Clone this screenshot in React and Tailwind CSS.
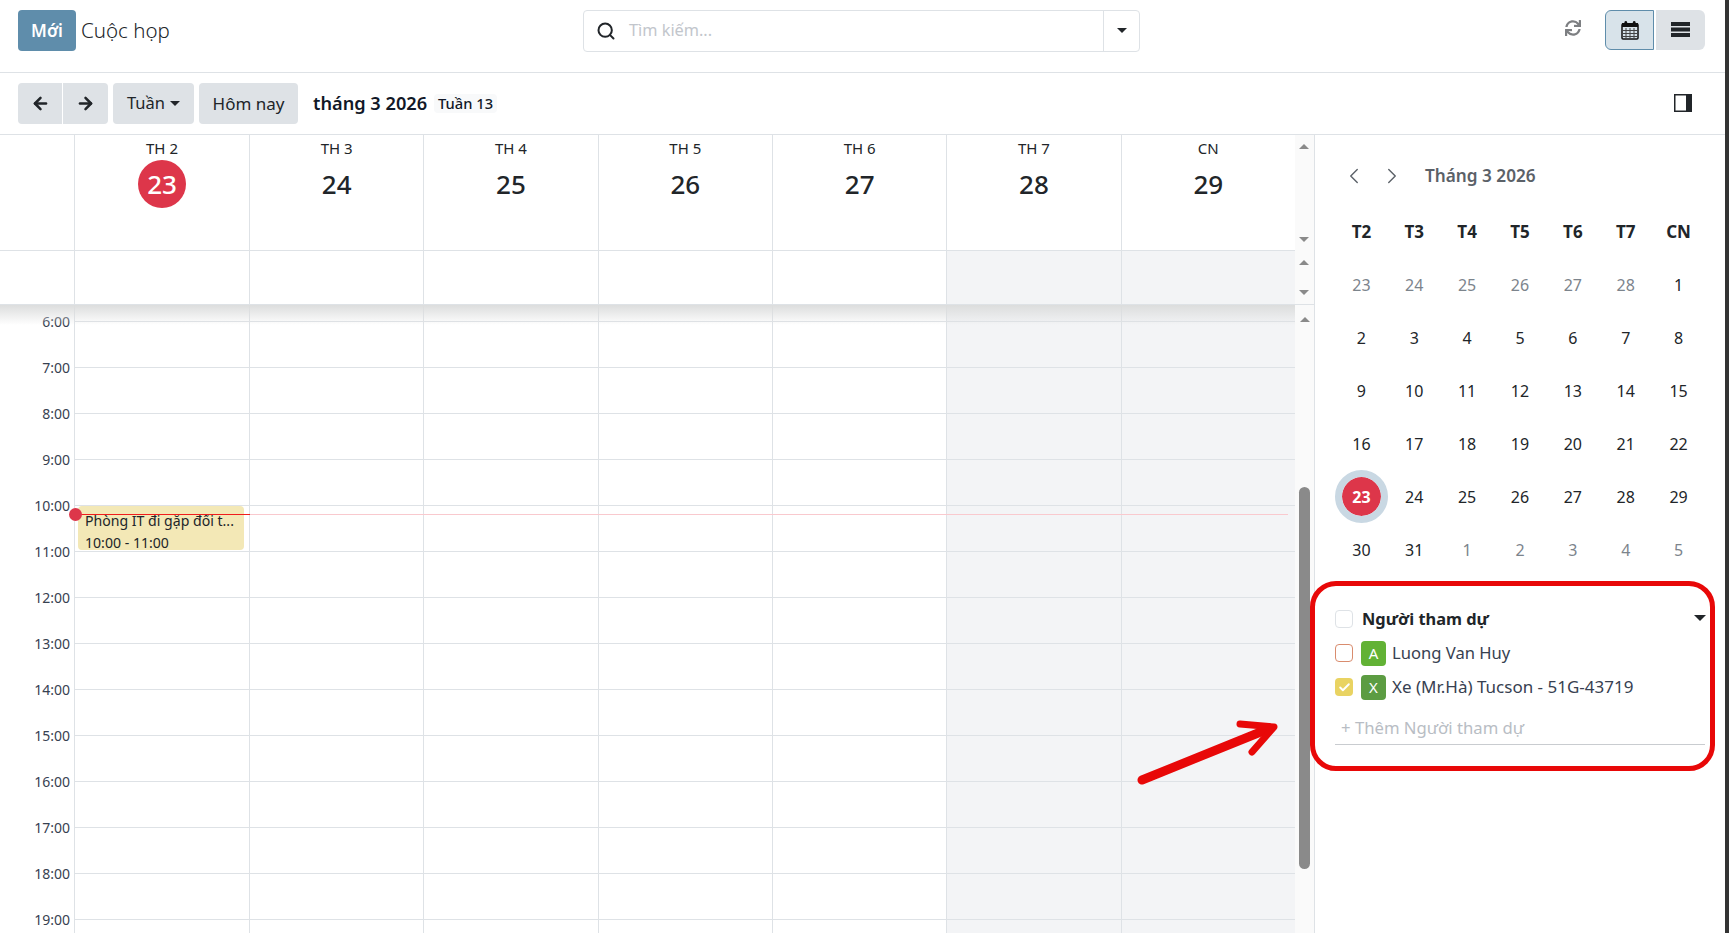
import { ArrowLeft, ArrowRight, Check, ChevronLeft, ChevronRight, Search } from "lucide-react";
import { FaSync } from "react-icons/fa";

const days = [
  { label: "TH 2", num: 23, today: true },
  { label: "TH 3", num: 24 },
  { label: "TH 4", num: 25 },
  { label: "TH 5", num: 26 },
  { label: "TH 6", num: 27 },
  { label: "TH 7", num: 28, weekend: true },
  { label: "CN", num: 29, weekend: true },
];

const hours = [6, 7, 8, 9, 10, 11, 12, 13, 14, 15, 16, 17, 18, 19];

const miniHead = ["T2", "T3", "T4", "T5", "T6", "T7", "CN"];
const miniDays = [
  [23, 24, 25, 26, 27, 28].map((d) => ({ d, muted: true })).concat([{ d: 1 }]),
  [2, 3, 4, 5, 6, 7, 8].map((d) => ({ d })),
  [9, 10, 11, 12, 13, 14, 15].map((d) => ({ d })),
  [16, 17, 18, 19, 20, 21, 22].map((d) => ({ d })),
  [23, 24, 25, 26, 27, 28, 29].map((d) => ({ d, today: d === 23 })),
  [{ d: 30 }, { d: 31 }].concat([1, 2, 3, 4, 5].map((d) => ({ d, muted: true }))),
];

const Caret = ({ className = "" }) => (
  <span className={`inline-block w-0 h-0 border-x-[5px] border-x-transparent border-t-[5px] border-t-[#212529] ${className}`} />
);

const TriUp = () => <span className="block w-0 h-0 border-x-[5px] border-x-transparent border-b-[5px] border-b-[#8a8a8a]" />;
const TriDown = () => <span className="block w-0 h-0 border-x-[5px] border-x-transparent border-t-[5px] border-t-[#8a8a8a]" />;

const CalendarIcon = () => (
  <svg width="18" height="20" viewBox="0 0 18 20">
    <rect x="1" y="4" width="16" height="15" rx="1" fill="#d8e3ea" stroke="#111" strokeWidth="1.5" />
    <rect x="1" y="3" width="16" height="4" fill="#111" />
    <path d="M5 8v10M9 8v10M13 8v10M2 10.5h14M2 13.5h14M2 16.5h14" stroke="#444" strokeWidth="1" />
    <rect x="3.5" y="1" width="2.6" height="5" rx="1.3" fill="#111" />
    <rect x="11.9" y="1" width="2.6" height="5" rx="1.3" fill="#111" />
  </svg>
);

const ListIcon = () => (
  <svg width="19" height="15" viewBox="0 0 19 15">
    <rect width="19" height="4" fill="#212529" />
    <rect y="5.5" width="19" height="4" fill="#212529" />
    <rect y="11" width="19" height="4" fill="#212529" />
  </svg>
);

const PanelIcon = () => (
  <svg width="18" height="18" viewBox="0 0 18 18">
    <rect x="0.75" y="0.75" width="16.5" height="16.5" fill="#fff" stroke="#212529" strokeWidth="1.5" />
    <rect x="12" y="0" width="6" height="18" fill="#212529" />
  </svg>
);

const TopBar = () => (
  <div className="flex items-center h-[73px] shrink-0 border-b border-[#dee2e6] pl-[18px] pr-[20px]">
    <div className="w-[565px] flex items-center gap-[5px] shrink-0 -mt-[11px]">
      <button className="w-[58px] h-[41px] rounded bg-[#5f8dab] text-white text-[17px] font-semibold">Mới</button>
      <span className="text-[20.5px] font-light text-[#212529]">Cuộc họp</span>
    </div>
    <div className="w-[557px] h-[42px] flex items-center rounded border border-[#dee2e6] -mt-[11px]">
      <div className="flex-1 flex items-center pl-[12px] gap-[13px]">
        <Search size={20} strokeWidth={2.4} className="text-[#212529]" />
        <span className="text-[16.3px] text-[#c2c6cc]">Tìm kiếm...</span>
      </div>
      <div className="w-[36px] h-full border-l border-[#dee2e6] flex items-center justify-center">
        <Caret />
      </div>
    </div>
    <div className="flex-1 flex items-center justify-end -mt-[13px]">
      <FaSync size={16} className="text-[#7d7f82] mr-[24px] -mt-[4px]" />
      <button className="w-[49px] h-[40px] rounded-l-md border border-[#5f8dab] bg-[#d8e3ea] flex items-center justify-center">
        <CalendarIcon />
      </button>
      <button className="ml-[2px] w-[49px] h-[40px] rounded-r-md bg-[#dee2e6] flex items-center justify-center">
        <ListIcon />
      </button>
    </div>
  </div>
);

const Toolbar = () => (
  <div className="flex items-center h-[62px] shrink-0 border-b border-[#dee2e6] pl-[18px] pr-[33px]">
    <button className="w-[44px] h-[41px] rounded-l bg-[#dee2e6] flex items-center justify-center text-[#212529]">
      <ArrowLeft size={19} strokeWidth={3.2} />
    </button>
    <button className="ml-px w-[45px] h-[41px] rounded-r bg-[#dee2e6] flex items-center justify-center text-[#212529]">
      <ArrowRight size={19} strokeWidth={3.2} />
    </button>
    <button className="ml-[5px] w-[81px] h-[41px] rounded bg-[#dee2e6] text-[16.5px] text-[#212529] flex items-center justify-center gap-[5px]">
      Tuần <Caret />
    </button>
    <button className="ml-[5px] w-[99px] h-[41px] rounded bg-[#dee2e6] text-[17px] text-[#212529]">Hôm nay</button>
    <span className="ml-[15px] text-[18.2px] font-semibold text-[#111827]">tháng 3 2026</span>
    <span className="ml-[7px] px-[4px] h-[19px] leading-[19px] rounded bg-[#f8f9fa] text-[14.7px] font-medium text-[#111827]">Tuần 13</span>
    <div className="ml-auto -mt-[2px]"><PanelIcon /></div>
  </div>
);

const Scroller = ({ className = "", children }) => (
  <div className={`w-[20px] shrink-0 bg-[#fafafa] border-r border-[#dee2e6] flex flex-col items-center ${className}`}>{children}</div>
);

const WeekHeader = () => (
  <div className="flex h-[116px] shrink-0">
    <div className="w-[74px] shrink-0 border-b border-[#dee2e6]" />
    {days.map((day, i) => (
      <div
        key={day.label}
        className={`border-l border-b border-[#dee2e6] flex flex-col items-center pt-[3px] ${i === 0 ? "w-[175px] shrink-0" : "flex-1"}`}
      >
        <span className="text-[15px] leading-[20px] text-[#212529]">{day.label}</span>
        {day.today ? (
          <span className="mt-[2px] w-[48px] h-[48px] rounded-full bg-[#dd364a] text-white text-[26px] font-medium flex items-center justify-center">
            {day.num}
          </span>
        ) : (
          <span className="mt-[2px] h-[48px] text-[26px] font-medium text-[#212529] flex items-center">{day.num}</span>
        )}
      </div>
    ))}
    <Scroller className="justify-between py-[9px]">
      <TriUp />
      <TriDown />
    </Scroller>
  </div>
);

const AllDay = () => (
  <div className="flex h-[54px] shrink-0 border-b border-[#dee2e6]">
    <div className="w-[74px] shrink-0" />
    {days.map((day, i) => (
      <div
        key={day.label}
        className={`border-l border-[#dee2e6] ${i === 0 ? "w-[175px] shrink-0" : "flex-1"} ${day.weekend ? "bg-[#f3f4f6]" : ""}`}
      />
    ))}
    <Scroller className="justify-between py-[9px]">
      <TriUp />
      <TriDown />
    </Scroller>
  </div>
);

const TimeGrid = () => (
  <div className="flex flex-1 min-h-0 overflow-hidden">
    <div className="relative flex flex-1 min-w-0 overflow-hidden">
      <div className="w-[74px] shrink-0 pt-[16px]">
        {hours.map((h) => (
          <div key={h} className="h-[46px] pr-[4px] text-right text-[14px] text-[#374151]">
            <span className="block leading-none -translate-y-[6px]">{h}:00</span>
          </div>
        ))}
      </div>
      {days.map((day, i) => (
        <div
          key={day.label}
          className={`border-l border-[#dee2e6] pt-[16px] ${i === 0 ? "w-[175px] shrink-0" : "flex-1"} ${day.weekend ? "bg-[#f3f4f6]" : ""}`}
        >
          {hours.map((h) => (
            <div key={h} className="h-[46px] border-t border-[#dee2e6]" />
          ))}
        </div>
      ))}

      {/* scroll shadow under the all day row */}
      <div className="absolute top-0 left-0 right-0 h-[20px] bg-gradient-to-b from-[#dcdddd] to-transparent" />

      {/* event */}
      <div className="absolute left-[78px] top-[201px] w-[166px] h-[44px] rounded bg-[#f3e8b6] pl-[7px] pt-[4px] text-[14.1px] leading-[21.5px] text-[#212529]">
        <div className="whitespace-nowrap">Phòng IT đi gặp đối t...</div>
        <div>10:00 - 11:00</div>
      </div>

      {/* now line */}
      <div className="absolute left-[75px] top-[209px] w-[175px] h-px bg-[#f01c1c]" />
      <div className="absolute left-[250px] right-[7px] top-[209px] h-px bg-[#f9c9ce]" />
      <div className="absolute left-[69px] top-[203px] w-[13px] h-[13px] rounded-full bg-[#dd364a]" />
    </div>
    <Scroller className="relative pt-[12px]">
      <TriUp />
      <div className="absolute left-[4px] top-[182px] w-[11px] h-[382px] rounded-full bg-[#8a8a8a]" />
    </Scroller>
  </div>
);

const MiniCalendar = () => (
  <div className="w-[370px]">
    <div className="flex items-center h-[30px]">
      <ChevronLeft size={26} strokeWidth={1.3} className="ml-[6px] text-[#5b6168]" />
      <ChevronRight size={26} strokeWidth={1.3} className="ml-[12px] text-[#5b6168]" />
      <span className="ml-[20px] text-[17.2px] font-semibold text-[#5b6168]">Tháng 3 2026</span>
    </div>
    <div className="grid grid-cols-7 mt-[15px] grid-rows-[52px_repeat(6,53px)]">
      {miniHead.map((h) => (
        <div key={h} className="flex items-center justify-center text-[17px] font-bold text-[#212529]">{h}</div>
      ))}
      {miniDays.flat().map((c, i) => (
        <div
          key={i}
          className={`flex items-center justify-center text-[16px] ${c.muted ? "text-[#7c848c]" : "text-[#212529]"}`}
        >
          {c.today ? (
            <span className="w-[39px] h-[39px] rounded-full bg-[#dd364a] text-white font-bold outline-[7px] outline-solid outline-[#c9d8e3] flex items-center justify-center">
              {c.d}
            </span>
          ) : (
            c.d
          )}
        </div>
      ))}
    </div>
  </div>
);

const Attendees = () => (
  <div className="w-[370px] mt-[26px]">
    <div className="relative flex items-center h-[34px]">
      <span className="w-[18px] h-[18px] rounded border border-[#dee2e6]" />
      <span className="ml-[9px] text-[16.4px] font-bold text-[#212529]">Người tham dự</span>
      <Caret className="absolute right-[-1px] top-[13px] border-x-[6px] border-t-[6px]" />
    </div>
    <div className="flex items-center h-[34px]">
      <span className="w-[18px] h-[18px] rounded border border-[#d98c6e]" />
      <span className="ml-[8px] w-[25px] h-[25px] rounded bg-[#62b235] text-white text-[15px] flex items-center justify-center">A</span>
      <span className="ml-[6px] text-[16.6px] leading-[22px] text-[#374151]">Luong Van Huy</span>
    </div>
    <div className="flex items-center h-[34px]">
      <span className="w-[18px] h-[18px] rounded bg-[#e9d362] flex items-center justify-center">
        <Check size={13} strokeWidth={3.5} className="text-white" />
      </span>
      <span className="ml-[8px] w-[25px] h-[25px] rounded bg-[#5c9c42] text-white text-[15px] flex items-center justify-center">X</span>
      <span className="ml-[6px] text-[17px] leading-[22px] text-[#374151]">Xe (Mr.Hà) Tucson - 51G-43719</span>
    </div>
    <div className="mt-[9px] h-[32px] pb-[2px] border-b border-[#c9ccd0] pl-[6px] flex items-center text-[16.7px] text-[#b8bdc4]">
      + Thêm Người tham dự
    </div>
  </div>
);

export default function App() {
  return (
    <div className="relative flex w-screen h-screen overflow-hidden bg-white font-['Noto_Sans',sans-serif]">
      <div className="flex-1 min-w-0 flex flex-col">
        <TopBar />
        <Toolbar />
        <div className="flex flex-1 min-h-0">
          <div className="w-[1315px] shrink-0 flex flex-col">
            <WeekHeader />
            <AllDay />
            <TimeGrid />
          </div>
          <div className="flex-1 pl-[20px] pt-[26px]">
            <MiniCalendar />
            <Attendees />
          </div>
        </div>
      </div>
      <div className="w-[4px] shrink-0 bg-[#333333]" />

      {/* red annotation drawn over the screenshot */}
      <div className="absolute left-[1310px] top-[581px] w-[405px] h-[190px] rounded-[26px] border-[5px] border-[#e80808]" />
      <svg className="absolute left-[1128px] top-[714px]" width="160" height="80" viewBox="0 0 160 80">
        <path d="M14 66 L140 15" stroke="#e80808" strokeWidth="9" strokeLinecap="round" fill="none" />
        <path d="M112 10 L146 13 L124 38" stroke="#e80808" strokeWidth="7" strokeLinecap="round" strokeLinejoin="round" fill="none" />
      </svg>
    </div>
  );
}
